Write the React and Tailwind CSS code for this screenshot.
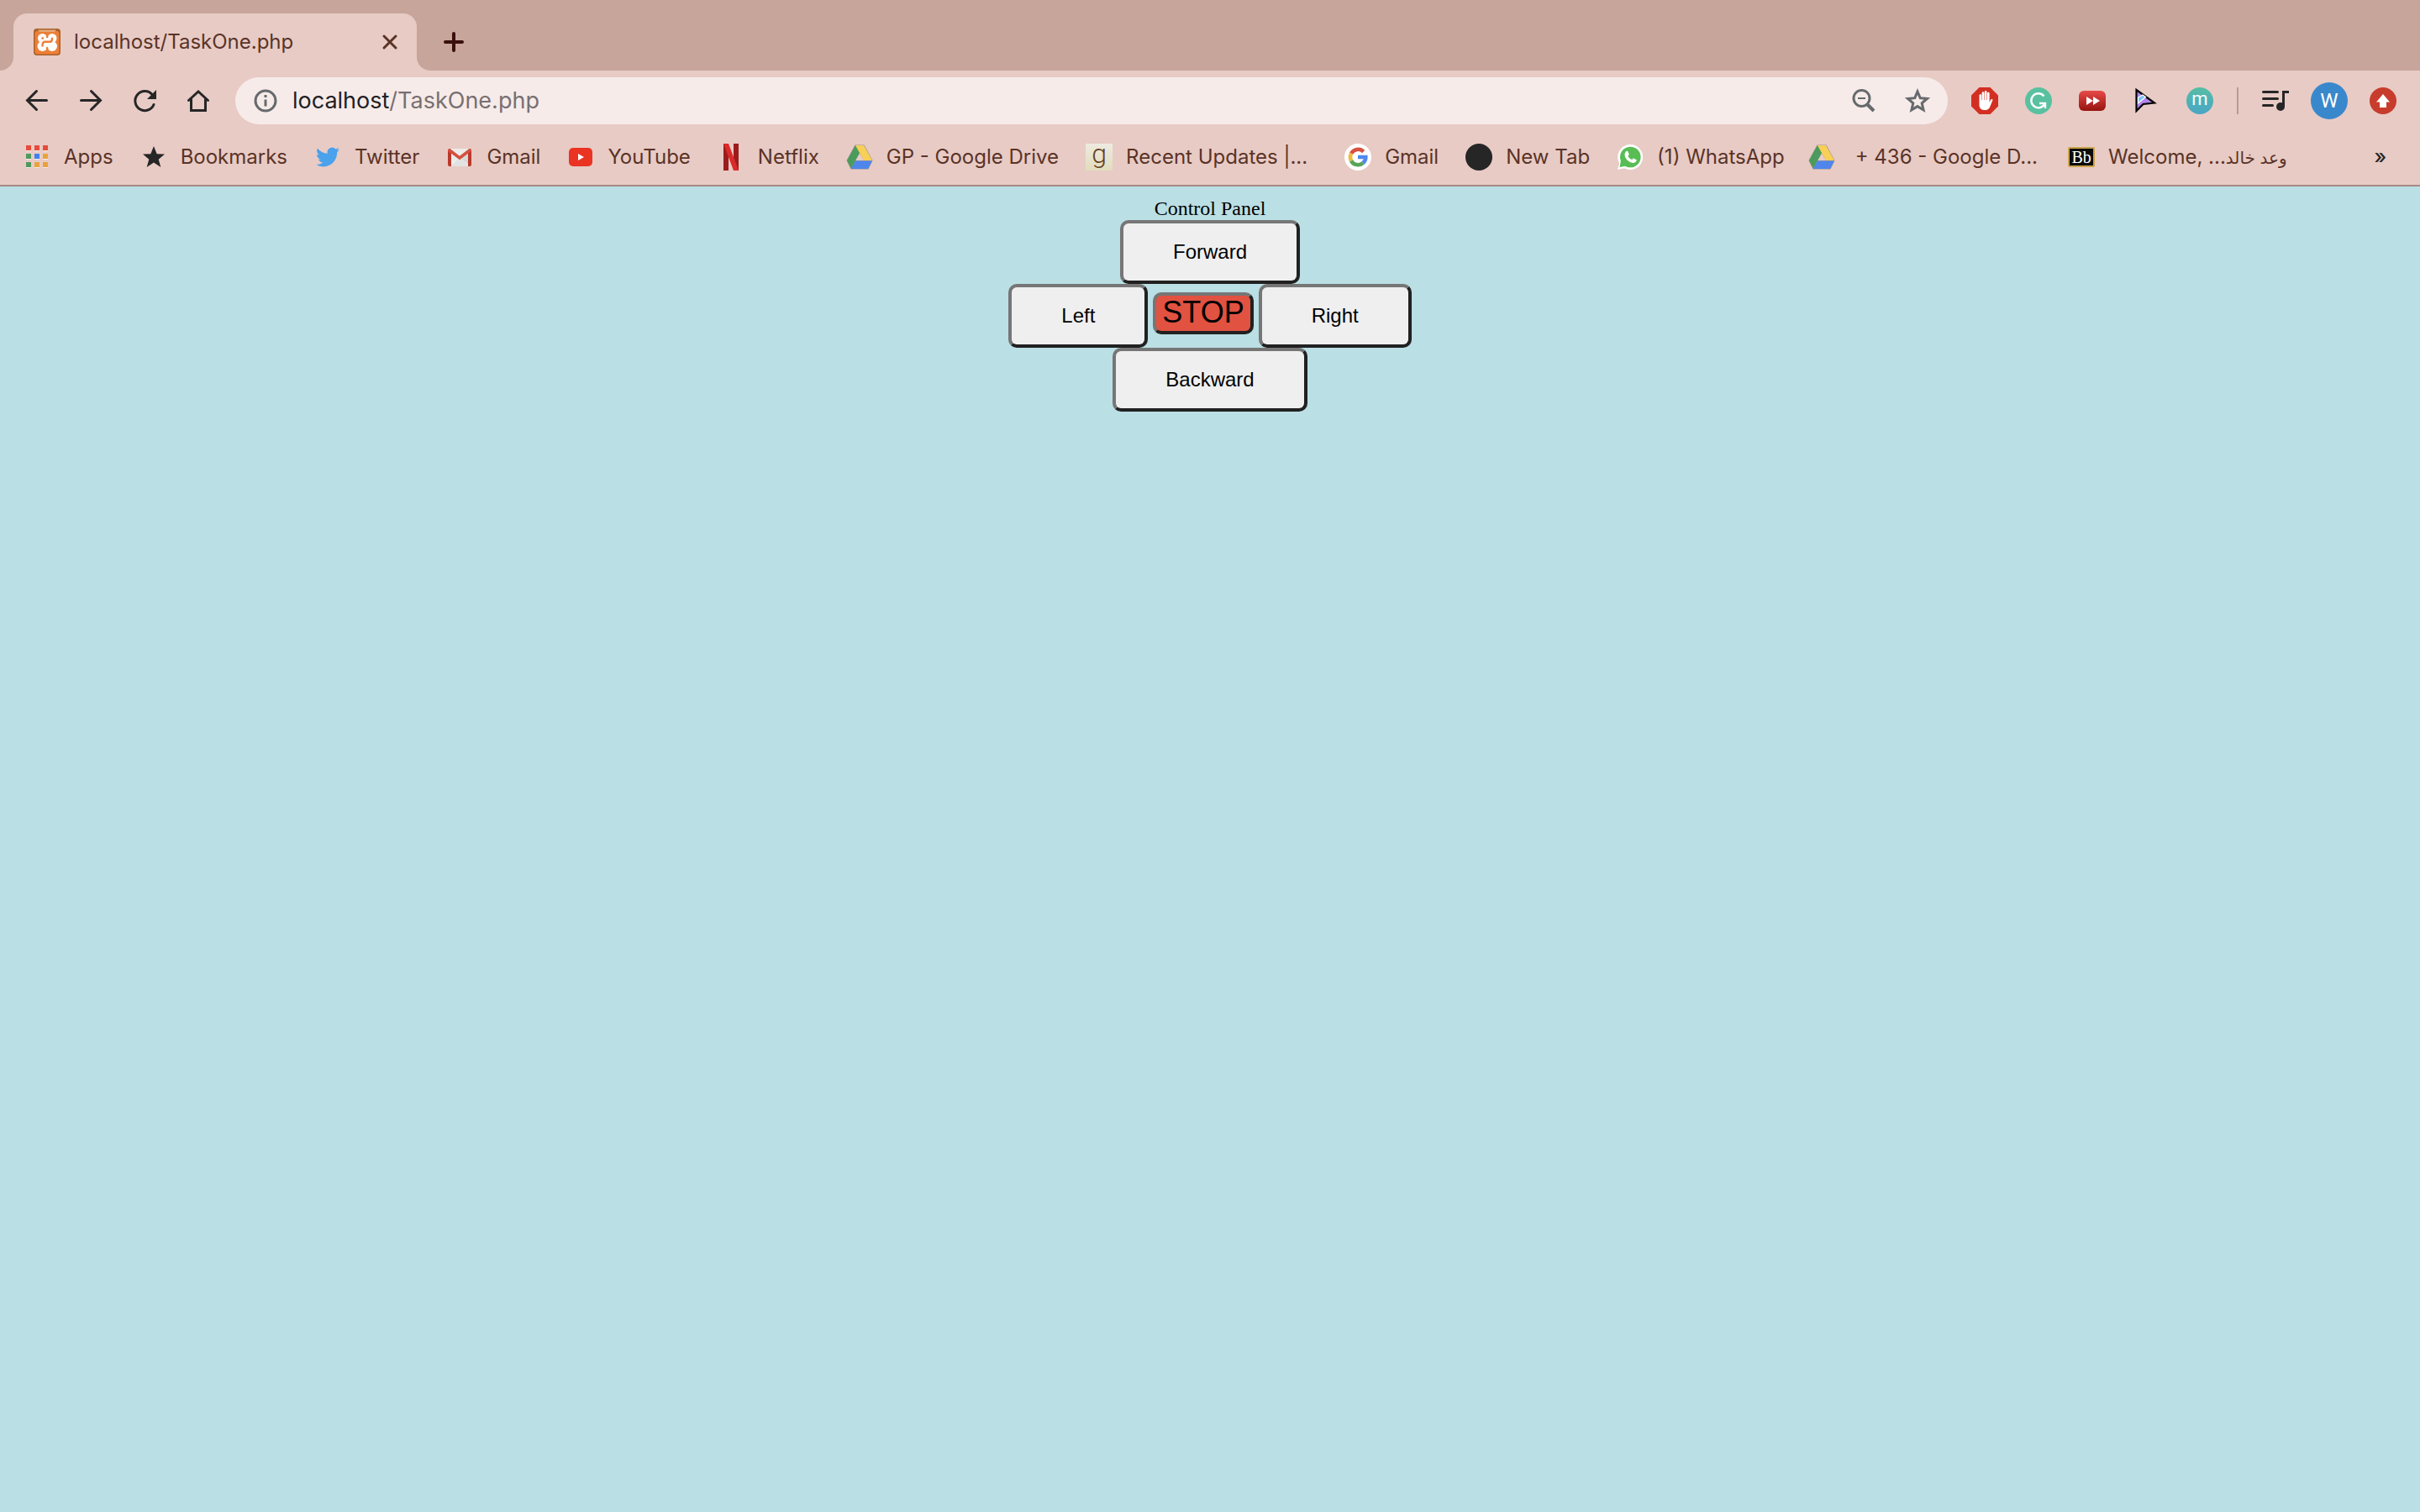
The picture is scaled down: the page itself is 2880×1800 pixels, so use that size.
import React from "react";

function Tile({ children, box = "0 0 32 32", className = "size-8" }) {
  return (
    <svg viewBox={box} className={`${className} shrink-0`} aria-hidden="true">
      {children}
    </svg>
  );
}

const AppsIcon = () => (
  <Tile>
    {[
      ["#e84b3c", "#e84b3c", "#e84b3c"],
      ["#4f9a5c", "#3f82ee", "#e8a33b"],
      ["#4f9a5c", "#e8a33b", "#e8a33b"],
    ].map((row, y) =>
      row.map((c, x) => (
        <g key={`${x}${y}`}>
          <rect x={3 + x * 10} y={2 + y * 10} width="6" height="7" fill="#f6e9e6" />
          <rect x={3 + x * 10} y={2 + y * 10} width="6" height="6" fill={c} />
        </g>
      ))
    )}
  </Tile>
);

const StarIcon = () => (
  <Tile>
    <path fill="#262626" d="M16 3l3.7 9.3 9.3.2-7.300 6.300 2.600 9.200L16 22.600 7.700 28l2.600-9.200L3 12.500l9.300-.2z" />
  </Tile>
);

const TwitterIcon = () => (
  <Tile box="0 0 24 24" className="size-8 p-0.5">
    <path fill="#4aa1ec" d="M23.950 4.570a10 10 0 0 1-2.820.770 4.960 4.960 0 0 0 2.160-2.720 9.900 9.900 0 0 1-3.120 1.180 4.920 4.920 0 0 0-8.380 4.480C7.690 8.090 4.070 6.130 1.640 3.160a4.920 4.920 0 0 0 1.520 6.570 4.900 4.900 0 0 1-2.230-.610v.060a4.920 4.920 0 0 0 3.950 4.830 5 5 0 0 1-2.210.080 4.940 4.940 0 0 0 4.600 3.420A9.870 9.870 0 0 1 0 19.540a14 14 0 0 0 7.550 2.210c9.050 0 14-7.500 14-13.980 0-.210 0-.420-.020-.630a9.940 9.940 0 0 0 2.460-2.550z" />
  </Tile>
);

const GmailIcon = () => (
  <Tile>
    <path fill="#ececea" d="M4 6h24v21H4z" />
    <path fill="#d8d8d6" d="M16 17l12 9V8z" />
    <path fill="#e2e2e0" d="M16 17L5 27h22z" />
    <path fill="#b93a2c" d="M2 8l4 2v17H4a2 2 0 0 1-2-2zM30 8l-4 2v17h2a2 2 0 0 0 2-2z" />
    <path fill="#d5503f" d="M2 7.500C2 6 4 5.400 5.300 6.400L16 14.800 26.700 6.400C28 5.400 30 6 30 7.500c0 .9-.4 1.600-1 2L16 19.300 3 9.500c-.6-.4-1-1.100-1-2z" />
  </Tile>
);

const YouTubeIcon = () => (
  <Tile>
    <rect x="2" y="5" width="28" height="22" rx="5" fill="#ea3323" />
    <path fill="#fff" d="M13 12l7 4-7 4z" />
  </Tile>
);

const NetflixIcon = () => (
  <Tile>
    <path fill="#9c1c1c" d="M7 0h6v32H7zM19 0h6v32h-6z" />
    <path fill="#d92b2a" d="M7 0h6l12 32h-6z" />
  </Tile>
);

const DriveIcon = () => (
  <Tile>
    <path fill="#9b948f" d="M10.500 1.500h11L31.500 20l-5 10.500H5.500L.5 20z" />
    <path fill="#4b9b5c" d="M11 2l5.200 9L6 29.500 1 20z" />
    <path fill="#f8cf57" d="M11 2h10l10 18H21z" />
    <path fill="#4f86ec" d="M11 20.500h20L26 30H6z" />
    <path fill="#e8cbc5" d="M16 11.500l5 8.500h-9.700z" />
  </Tile>
);

const GoodreadsIcon = () => (
  <span aria-hidden="true" className="flex size-8 shrink-0 items-center justify-center bg-linear-to-b from-[#eeebe0] to-[#e2dcbd] pb-2 font-[Roboto,sans-serif] text-[32px] leading-8 font-light text-[#67421f]">
    g
  </span>
);

const GoogleIcon = () => (
  <Tile>
    <circle cx="16" cy="16" r="16" fill="#fff" />
    <g fill="none" strokeWidth="4.600">
      <path stroke="#d9503f" d="M8 11.700A9.300 9.300 0 0 1 22.700 9.500" />
      <path stroke="#f0bb41" d="M8 20.300a9.400 9.400 0 0 1 0-8.600" />
      <path stroke="#57a55a" d="M22.200 23A9.300 9.300 0 0 1 8 20.300" />
      <path stroke="#5088ee" d="M16 16h9.300a9.300 9.300 0 0 1-3.100 7" />
    </g>
  </Tile>
);

const DotIcon = () => <span aria-hidden="true" className="size-8 shrink-0 rounded-full bg-[#262626]" />;

const WhatsAppIcon = () => (
  <Tile>
    <path fill="#fff" d="M16 1a15 15 0 1 1-7 28.200L1 31l2.200-7.500A15 15 0 0 1 16 1z" />
    <circle cx="16.300" cy="16" r="12.300" fill="#58bd55" />
    <path fill="#58bd55" d="M5 20l-1.500 8 8-1.600z" />
    <path fill="#fff" d="M11.500 9c.8-.4 1.600-.2 2 .6l1.100 2.600c.2.600-.1 1.300-1.200 2.500.9 2 2.500 3.500 4.600 4.400 1.300-1.500 1.700-1.900 2.300-1.600l2.800 1.400c.6.300.7.800.4 1.700-.8 2.200-3.300 2.800-5.300 2.200-4-1.200-7-4-8.300-7.400-.9-2.600-.2-5.300 1.600-6.400z" />
  </Tile>
);

const BlackboardIcon = () => (
  <span aria-hidden="true" className="flex h-6 w-8 shrink-0 items-center justify-center rounded-xs border-2 border-[#c9a24a] bg-[#0b0b0b] font-['Liberation_Serif',serif] text-[20px] leading-5 text-white">
    Bb
  </span>
);

const bookmarks = [
  { label: "Apps", Icon: AppsIcon },
  { label: "Bookmarks", Icon: StarIcon },
  { label: "Twitter", Icon: TwitterIcon },
  { label: "Gmail", Icon: GmailIcon },
  { label: "YouTube", Icon: YouTubeIcon },
  { label: "Netflix", Icon: NetflixIcon },
  { label: "GP - Google Drive", Icon: DriveIcon },
  { label: "Recent Updates |...", Icon: GoodreadsIcon, space: "mr-11" },
  { label: "Gmail", Icon: GoogleIcon },
  { label: "New Tab", Icon: DotIcon },
  { label: "(1) WhatsApp", Icon: WhatsAppIcon, space: "mr-7" },
  { label: "+ 436 - Google D...", Icon: DriveIcon, space: "mr-9", inset: true },
  { label: "Welcome, ...", tail: "وعد خالد", Icon: BlackboardIcon },
];

function TabStrip() {
  return (
    <div className="flex h-[84px] items-end bg-[#c7a59a]">
      <div className="size-4 bg-[#e8cbc5]">
        <div className="size-4 rounded-br-2xl bg-[#c7a59a]" />
      </div>
      <div className="flex h-[68px] w-[480px] items-center rounded-t-2xl bg-[#e8cbc5] pr-5 pl-6">
        <Tile>
          <rect width="32" height="32" rx="4" fill="#a9622a" />
          <rect x="1.500" y="3" width="29" height="27.500" rx="3" fill="#ec7f37" />
          <path fill="#e6a878" d="M5 1.500h22l-2 2.500H7z" />
          <g fill="#fff">
            <circle cx="10.500" cy="11.500" r="5.500" />
            <circle cx="22" cy="11.500" r="5.500" />
            <circle cx="10.500" cy="21" r="6" />
            <circle cx="22" cy="21" r="6" />
            <path d="M7 11h18v11H7z" />
          </g>
          <g fill="none" stroke="#ec7f37" strokeWidth="2.400" strokeLinecap="round">
            <path d="M16.200 5v5M16.200 23v5M4 16.300h.8M27.800 16.300h.8" />
            <path d="M10.500 11.500h.5M10.500 20.500c0-3 1-4.700 3-4.700h6c2 0 2.500-1.500 2.500-4" />
          </g>
        </Tile>
        <span className="ml-4 text-[24px] text-[#5a3327]">localhost/TaskOne.php</span>
        <button type="button" aria-label="Close tab" className="ml-auto">
          <Tile box="0 0 24 24" className="size-6">
            <path stroke="#5a3327" strokeWidth="3" strokeLinecap="round" d="M5 5l14 14M19 5L5 19" />
          </Tile>
        </button>
      </div>
      <div className="size-4 bg-[#e8cbc5]">
        <div className="size-4 rounded-bl-2xl bg-[#c7a59a]" />
      </div>
      <button type="button" aria-label="New tab" className="mb-[22px] ml-4">
        <Tile box="0 0 24 24" className="size-6">
          <path stroke="#3a0f0c" strokeWidth="4" strokeLinecap="round" d="M12 2v20M2 12h20" />
        </Tile>
      </button>
    </div>
  );
}

function NavButton({ label, children }) {
  return (
    <button type="button" aria-label={label} className="size-8">
      <Tile>
        <g fill="none" stroke="#262626" strokeWidth="3" strokeLinecap="round">
          {children}
        </g>
      </Tile>
    </button>
  );
}

function Toolbar() {
  return (
    <div className="flex items-center pt-2 pr-7 pl-7">
      <div className="flex gap-8">
        <NavButton label="Back">
          <path d="M27.500 15.500H5M15.500 4.500L4.500 15.500l11 11" />
        </NavButton>
        <NavButton label="Forward">
          <path d="M4.500 15.500H27M16.500 4.500l11 11-11 11" />
        </NavButton>
        <NavButton label="Reload">
          <path d="M27 20.500A11.500 11.500 0 1 1 25 8.500" />
          <path fill="#262626" stroke="none" d="M30 3v11H19z" />
        </NavButton>
        <NavButton label="Home">
          <path d="M4.500 15.500L16 5l11.500 10.500M7.500 14v13.500h17V14" />
        </NavButton>
      </div>
      <div className="ml-7 flex h-14 flex-1 items-center rounded-full bg-[#f7ebe9] px-5">
        <Tile>
          <circle cx="16" cy="16" r="12" fill="none" stroke="#666a6d" strokeWidth="3" />
          <path fill="#666a6d" d="M14.500 9h3v3h-3zM14.500 14.500h3v8h-3z" />
        </Tile>
        <div className="relative ml-4 flex-1 text-[27px]">
          <span aria-hidden="true" className="text-[#777071]">
            <span className="text-[#202124]">localhost</span>/TaskOne.php
          </span>
          <input
            aria-label="Address"
            defaultValue="localhost/TaskOne.php"
            className="absolute inset-0 w-full bg-transparent text-transparent outline-none"
          />
        </div>
        <button type="button" aria-label="Zoom" className="mr-8">
          <Tile>
            <g fill="none" stroke="#666a6d" strokeWidth="3">
              <circle cx="13.500" cy="13" r="9.500" />
              <path d="M9 13h9" strokeWidth="2" />
              <path d="M20 20l8 8" strokeWidth="4" />
            </g>
          </Tile>
        </button>
        <button type="button" aria-label="Bookmark this page">
          <Tile>
            <path fill="none" stroke="#666a6d" strokeWidth="3" d="M16 5l3.200 7.700 8.300.7-6.300 5.400 1.900 8.100L16 22.600l-7.100 4.300 1.900-8.100-6.300-5.400 8.300-.7z" />
          </Tile>
        </button>
      </div>
      <div className="ml-7 flex items-center gap-8">
        <button type="button" aria-label="Ad blocker">
          <Tile>
            <path fill="#d22f22" d="M9.500 0h13L32 9.500v13L22.500 32h-13L0 22.500v-13z" />
            <path fill="#fff" d="M9.500 9.500a1.300 1.300 0 0 1 2.600 0V15h.5V6.500a1.300 1.300 0 0 1 2.700 0V15h.5V5.300a1.300 1.300 0 0 1 2.700 0V15h.5V7a1.300 1.300 0 0 1 2.600 0v11l1.300-3c.8-1.700 2.900-1.200 2.500.3l-2.900 7.200c-1 2.800-2.800 4.500-5.600 4.500h-1.500c-3.900 0-5.900-2.800-5.900-6z" />
          </Tile>
        </button>
        <button type="button" aria-label="Grammar checker">
          <Tile>
            <circle cx="16" cy="16" r="16" fill="#59c19f" />
            <g fill="none" stroke="#fff" strokeWidth="2.400">
              <path d="M22.500 10.500a8.500 8.500 0 1 0 1 9" />
              <path d="M17 19h7v6" />
            </g>
          </Tile>
        </button>
        <button type="button" aria-label="Video speed">
          <Tile>
            <defs>
              <linearGradient id="speed" x2="0" y2="1">
                <stop offset="0" stopColor="#e84a48" />
                <stop offset="1" stopColor="#96130f" />
              </linearGradient>
            </defs>
            <rect y="4" width="32" height="24" rx="6" fill="url(#speed)" />
            <path fill="#fff" d="M9 11l8 5-8 5zM17 11l8 5-8 5z" />
          </Tile>
        </button>
        <button type="button" aria-label="Custom cursor">
          <Tile>
            <path fill="#b184ec" stroke="#000" strokeWidth="2.200" d="M4.500 3v25l8-8L26 18.500z" />
            <path fill="#7cc4f5" stroke="#fff" strokeWidth="1.200" d="M6.500 12v7l9-7.500-3.500-2.500z" />
          </Tile>
        </button>
        <button type="button" aria-label="Extension m" className="flex size-8 items-center justify-center rounded-full bg-linear-to-b from-[#56bda3] to-[#4aa5c6] pb-1 font-[Roboto,sans-serif] text-[22px] leading-8 text-white">
          m
        </button>
      </div>
      <div className="ml-7 h-8 w-0.5 bg-[#b79b95]" />
      <div className="ml-7 flex items-center gap-[26px]">
        <button type="button" aria-label="Media controls">
          <Tile>
            <path stroke="#262626" strokeWidth="3" strokeLinecap="round" d="M1.500 5.500h17M1.500 13.500h17M1.500 21.500h11" />
            <circle cx="22" cy="23" r="5" fill="#262626" />
            <path fill="#262626" d="M24 4h8v3h-5v16h-3z" />
          </Tile>
        </button>
        <button type="button" aria-label="Profile" className="flex size-11 items-center justify-center rounded-full bg-[#3a88cc] font-[Roboto,sans-serif] text-[24px] text-white">
          W
        </button>
        <button type="button" aria-label="Update browser">
          <Tile>
            <circle cx="16" cy="16" r="16" fill="#c83c2d" />
            <path fill="#fff" d="M16 8l8 9.500h-4V24h-8v-6.500H8z" />
          </Tile>
        </button>
      </div>
    </div>
  );
}

function BookmarksBar() {
  return (
    <nav aria-label="Bookmarks" className="flex h-18 items-center pt-1.5 pr-10 pl-7 text-[24px] text-[#5a3327]">
      {bookmarks.map(({ label, tail, Icon, space = "mr-8", inset }, i) => (
        <a key={i} href="#" className={`flex shrink-0 items-center whitespace-nowrap ${inset ? "gap-6" : "gap-4"} ${space}`}>
          <Icon />
          <span className="font-[Inter,'DejaVu_Sans',sans-serif]">
            {label}
            {tail && <span className="text-[20px]">{tail}</span>}
          </span>
        </a>
      ))}
      <button type="button" aria-label="More bookmarks" className="ml-auto font-medium text-[#262626]">
        »
      </button>
    </nav>
  );
}

function PadButton({ className = "px-[59px] py-5 text-[24px] leading-7 bg-[#efefef]", children }) {
  return (
    <button
      type="button"
      className={`rounded-[10px] border-4 border-t-[#767676] border-r-[#212121] border-b-[#212121] border-l-[#767676] ${className}`}
    >
      {children}
    </button>
  );
}

function ControlPanel() {
  return (
    <main className="flex flex-1 flex-col items-center bg-[#badfe4] pt-3 font-['Liberation_Sans',Arial,sans-serif] text-black">
      <h1 className="font-['Liberation_Serif','Times_New_Roman',serif] text-[24px] leading-7">Control Panel</h1>
      <PadButton>Forward</PadButton>
      <div className="flex items-baseline gap-1.5">
        <PadButton>Left</PadButton>
        <PadButton className="bg-[#e15241] px-[7px] pb-0.5 text-[36px] leading-10">STOP</PadButton>
        <PadButton>Right</PadButton>
      </div>
      <PadButton>Backward</PadButton>
    </main>
  );
}

export default function App() {
  return (
    <div className="flex min-h-screen flex-col bg-[#e8cbc5] font-[Inter,sans-serif]">
      <header className="flex flex-col border-b-2 border-[#a58a84]">
        <TabStrip />
        <Toolbar />
        <BookmarksBar />
      </header>
      <ControlPanel />
    </div>
  );
}
